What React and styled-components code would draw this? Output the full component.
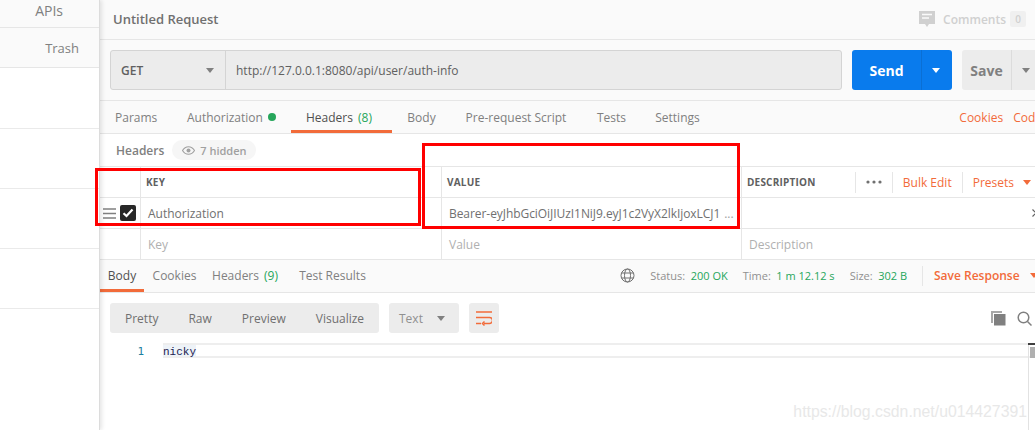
import React from 'react';
import styled, { createGlobalStyle } from 'styled-components';

const GlobalStyle = createGlobalStyle`
  html, body {
    margin: 0;
    padding: 0;
    background: #fff;
  }
  body {
    font-family: "Open Sans", "Liberation Sans", sans-serif;
    font-size: 12px;
    color: #808080;
  }
  * {
    box-sizing: border-box;
  }
`;

const Page = styled.div`
  position: relative;
  display: flex;
  width: 1035px;
  height: 430px;
  overflow: hidden;
`;

const Sidebar = styled.aside`
  flex: 0 0 100px;
  display: flex;
  flex-direction: column;
  background: #fff;
  border-right: 1px solid #dcdcdc;
  box-shadow: 2px 0 4px rgba(0, 0, 0, 0.1);
  z-index: 1;
`;

const SideTab = styled.div`
  height: ${props => props.$height}px;
  display: flex;
  justify-content: flex-end;
  align-items: center;
  padding-right: ${props => props.$pad}px;
  padding-bottom: ${props => props.$bottom || 0}px;
  font-size: ${props => props.$size}px;
  color: #808080;
  background: #fafafa;
  border-bottom: 1px solid #e6e6e6;
`;

const SideItem = styled.div`
  height: ${props => props.$height}px;
  border-bottom: 1px solid #eaeaea;
`;

const Main = styled.main`
  flex: 1;
  min-width: 0;
  display: flex;
  flex-direction: column;
`;

const TitleBar = styled.div`
  height: 40px;
  flex: none;
  display: flex;
  align-items: center;
  justify-content: space-between;
  padding: 0 9px 1px 13px;
  background: #fafafa;
  border-bottom: 1px solid #e6e6e6;
`;

const Title = styled.div`
  font-size: 13px;
  font-weight: 600;
  color: #707070;
  padding-bottom: 1px;
`;

const Comments = styled.div`
  display: flex;
  align-items: center;
  color: #d0d0d0;
  font-weight: 600;
  font-size: 12px;
`;

const CommentCount = styled.span`
  width: 16px;
  height: 16px;
  margin: 0 0 0 4px;
  display: flex;
  align-items: center;
  justify-content: center;
  background: #f0f0f0;
  border-radius: 2px;
  font-size: 10px;
`;

const UrlBar = styled.div`
  height: 61px;
  flex: none;
  display: flex;
  align-items: center;
  padding: 0 0 0 10px;
  background: #fafafa;
  border-bottom: 1px solid #e6e6e6;
`;

const UrlGroup = styled.div`
  flex: 0 0 732px;
  height: 40px;
  display: flex;
  background: #ececec;
  border: 1px solid #d4d4d4;
  border-radius: 3px;
`;

const Method = styled.div`
  flex: 0 0 115px;
  display: flex;
  align-items: center;
  justify-content: space-between;
  padding: 0 11px 0 10px;
  border-right: 1px solid #d4d4d4;
  font-size: 12px;
  font-weight: 600;
  color: #606060;
`;

const UrlText = styled.div`
  display: flex;
  align-items: center;
  padding-left: 10px;
  font-size: 12px;
  color: #606060;
`;

const Caret = styled.span`
  flex: none;
  width: 0;
  height: 0;
  border-left: 4px solid transparent;
  border-right: 4px solid transparent;
  border-top: 5px solid ${props => props.$color || '#808080'};
`;

const SendButton = styled.div`
  flex: 0 0 100px;
  height: 40px;
  margin-left: 10px;
  display: flex;
  background: #097bed;
  border-radius: 3px;
  color: #fff;
  font-size: 14px;
  font-weight: 700;
`;

const SaveButton = styled.div`
  flex: 0 0 88px;
  height: 40px;
  margin-left: 10px;
  display: flex;
  background: #ececec;
  border-radius: 3px;
  color: #808080;
  font-size: 14px;
  font-weight: 700;
`;

const ButtonLabel = styled.span`
  flex: 0 0 ${props => props.$width}px;
  display: flex;
  align-items: center;
  justify-content: center;
  padding-top: 1px;
`;

const ButtonCaret = styled.span`
  flex: 1;
  display: flex;
  align-items: center;
  padding-left: ${props => props.$pad}px;
  border-left: 1px solid ${props => props.$line};
`;

const RequestTabs = styled.div`
  height: 33px;
  flex: none;
  display: flex;
  align-items: stretch;
  background: #fafafa;
  border-bottom: 1px solid #e6e6e6;
`;

const Tab = styled.div`
  position: relative;
  flex: 0 0 ${props => props.$width}px;
  display: flex;
  align-items: center;
  justify-content: ${props => (props.$start ? 'flex-start' : 'center')};
  padding-left: ${props => props.$start || 0}px;
  font-size: 12px;
  color: ${props => (props.$active ? '#505050' : '#808080')};
  white-space: nowrap;
  ${props => props.$active && 'box-shadow: inset 0 -3px 0 #f26b3a;'}
`;

const ResponseTab = styled(Tab)`
  padding-bottom: 1px;
`;

const TabCount = styled.span`
  color: #26a65b;
  margin-left: 5px;
`;

const Dot = styled.span`
  width: 8px;
  height: 8px;
  margin-left: 5px;
  border-radius: 50%;
  background: #26a65b;
`;

const TabLinks = styled.div`
  margin-left: auto;
  display: flex;
  align-items: center;
  gap: 10px;
  margin-right: -7px;
  color: #f26b3a;
  font-size: 12px;
`;

const HeadersBar = styled.div`
  height: 32px;
  flex: none;
  display: flex;
  align-items: center;
  padding-left: 16px;
  gap: 8px;
  font-size: 12px;
  font-weight: 600;
  color: #808080;
`;

const HiddenPill = styled.span`
  height: 20px;
  display: flex;
  align-items: center;
  gap: 5px;
  padding: 0 9px 0 10px;
  background: #f6f6f6;
  border-radius: 10px;
  color: #a0a0a0;
  font-size: 11px;
  font-weight: 600;
`;

const Grid = styled.div`
  flex: none;
  display: grid;
  grid-template-columns: 41px 301px 300px 1fr;
  grid-template-rows: 31px 31px 31px;
  border-top: 1px solid #e6e6e6;
`;

const Cell = styled.div`
  display: flex;
  align-items: center;
  min-width: 0;
  padding: ${props => (props.$drag ? '0 0 0 3px' : '0 7px')};
  gap: 4px;
  border-right: ${props => (props.$last ? 'none' : '1px solid #e6e6e6')};
  border-bottom: 1px solid #e6e6e6;
  font-size: 12px;
  color: ${props => (props.$placeholder ? '#b0b0b0' : '#707070')};
`;

const HeadCell = styled(Cell)`
  padding-left: ${props => (props.$drag ? 0 : 5)}px;
  font-size: 10px;
  font-weight: 700;
  letter-spacing: 0.2px;
  color: #606060;
`;

const ValueText = styled.span`
  white-space: nowrap;
  letter-spacing: -0.06px;
`;

const Ellipsis = styled.span`
  color: #a0a0a0;
`;

const Checkbox = styled.span`
  width: 16px;
  height: 16px;
  display: flex;
  align-items: center;
  justify-content: center;
  background: #282828;
  border-radius: 2px;
`;

const TableActions = styled.div`
  margin-left: auto;
  display: flex;
  align-items: center;
  margin-right: -13px;
  font-size: 12px;
  font-weight: 400;
  letter-spacing: 0;
  color: #f26b3a;
`;

const ActionCell = styled.span`
  height: 21px;
  display: flex;
  align-items: center;
  gap: 9px;
  padding: 0 ${props => props.$pad}px;
  border-left: 1px solid #e6e6e6;
`;

const RemoveIcon = styled.svg`
  flex: none;
  margin-left: auto;
  margin-right: -12px;
`;

const ResponseTabs = styled.div`
  height: 33px;
  flex: none;
  display: flex;
  align-items: stretch;
  background: #fafafa;
  border-bottom: 1px solid #e6e6e6;
`;

const ResponseMeta = styled.div`
  margin-left: auto;
  display: flex;
  align-items: center;
  padding-bottom: 1px;
  font-size: 11px;
  color: #909090;
`;

const MetaItem = styled.span`
  margin-left: ${props => props.$gap}px;
  white-space: nowrap;
`;

const MetaValue = styled.span`
  color: #26a65b;
  margin-left: 5.500px;
`;

const SaveResponse = styled.span`
  display: flex;
  align-items: center;
  gap: 10px;
  height: 20px;
  width: 113px;
  flex: none;
  margin-left: 15px;
  padding-left: 11px;
  border-left: 1px solid #e6e6e6;
  color: #f26b3a;
  font-size: 12px;
  font-weight: 600;
  white-space: nowrap;
`;

const Toolbar = styled.div`
  height: 50px;
  flex: none;
  display: flex;
  align-items: center;
  padding-left: 10px;
  gap: 10px;
`;

const FormatGroup = styled.div`
  height: 30px;
  display: flex;
  align-items: center;
  background: #ececec;
  border-radius: 3px;
  color: #707070;
  font-size: 12px;
  padding-left: 15px;
  width: 269px;
  gap: 30px;
`;

const FormatSelect = styled.div`
  width: 70px;
  height: 30px;
  display: flex;
  align-items: center;
  justify-content: space-between;
  padding: 0 14px 0 10px;
  background: #ececec;
  border-radius: 3px;
  color: #909090;
  font-size: 12px;
`;

const WrapButton = styled.div`
  width: 30px;
  height: 30px;
  display: flex;
  align-items: center;
  justify-content: center;
  background: #ececec;
  border-radius: 3px;
`;

const ToolIcons = styled.div`
  margin-left: auto;
  display: flex;
  align-items: center;
  gap: 11px;
  margin-right: 3px;
`;

const Code = styled.div`
  position: relative;
  flex: 1;
  display: flex;
  align-items: flex-start;
`;

const Gutter = styled.span`
  flex: 0 0 63px;
  height: 15px;
  padding-right: 19px;
  padding-top: 1px;
  text-align: right;
  font-family: "DejaVu Sans Mono", "Liberation Mono", monospace;
  font-size: 11px;
  line-height: 15px;
  color: #1d7f9e;
`;

const ActiveLine = styled.div`
  flex: 1;
  height: 15px;
  border-top: 2px solid #eeeeee;
  border-bottom: 2px solid #eeeeee;
  font-family: "Liberation Mono", "DejaVu Sans Mono", monospace;
  font-size: 11px;
  line-height: 12px;
  color: #202050;
`;

const Selected = styled.span`
  display: inline-block;
  height: 11px;
  background: #eef3f8;
  padding-top: 1px;
`;

const ScrollTrack = styled.span`
  position: absolute;
  top: 0;
  right: 6px;
  bottom: 0;
  width: 1px;
  background: #e2e2e2;
`;

const ScrollMark = styled.span`
  position: absolute;
  top: 0;
  right: 0;
  width: 7px;
  height: 15px;
  background: #b0b0b0 content-box;
  padding: 2px 0 0 2px;
  border-top: 2px solid #404040;
`;

const RedBox = styled.div`
  position: absolute;
  left: ${props => props.$left}px;
  top: ${props => props.$top}px;
  width: ${props => props.$width}px;
  height: ${props => props.$height}px;
  border: 3px solid #ff0000;
  z-index: 2;
`;

const Watermark = styled.div`
  position: absolute;
  right: 8px;
  bottom: 10px;
  font-family: "Liberation Sans", Arial, sans-serif;
  font-size: 15.800px;
  line-height: 17px;
  color: #e8e8e8;
  z-index: 2;
`;

const CommentIcon = () => (
  <svg width="16" height="16" viewBox="0 0 16 16" style={{ marginRight: 8 }}>
    <path d="M0 0h16v13h-6l-2 3-2-3H0z" fill="#d0d0d0" />
    <path d="M3 3.500h10M3 7h7" stroke="#fafafa" strokeWidth="1.600" />
  </svg>
);

const EyeIcon = () => (
  <svg width="13" height="9" viewBox="0 0 13 9">
    <path d="M.5 4.500C2 2 4 .7 6.500.7S11 2 12.500 4.500C11 7 9 8.300 6.500 8.300S2 7 .5 4.500z" fill="none" stroke="#a0a0a0" strokeWidth="1.100" />
    <circle cx="6.500" cy="4.500" r="2" fill="#a0a0a0" />
  </svg>
);

const DragIcon = () => (
  <svg width="13" height="11" viewBox="0 0 13 11">
    <path d="M0 1h13M0 5.500h13M0 10h13" stroke="#808080" strokeWidth="1.300" />
  </svg>
);

const CheckIcon = () => (
  <svg width="12" height="10" viewBox="0 0 12 10">
    <path d="M1.500 5.200L4.500 8 10.500 1.500" fill="none" stroke="#fff" strokeWidth="2.200" />
  </svg>
);

const DotsIcon = () => (
  <svg width="16" height="4" viewBox="0 0 16 4">
    <circle cx="2" cy="2" r="1.600" fill="#707070" />
    <circle cx="8" cy="2" r="1.600" fill="#707070" />
    <circle cx="14" cy="2" r="1.600" fill="#707070" />
  </svg>
);

const GlobeIcon = () => (
  <svg width="15" height="15" viewBox="0 0 15 15" fill="none" stroke="#707070" strokeWidth="1">
    <circle cx="7.500" cy="7.500" r="6.500" />
    <ellipse cx="7.500" cy="7.500" rx="3" ry="6.500" />
    <path d="M1.500 5h12M1.500 10h12" />
  </svg>
);

const WrapIcon = () => (
  <svg width="16" height="15" viewBox="0 0 16 15" fill="none" stroke="#f26b3a" strokeWidth="1.500">
    <path d="M0 1h16M0 6.500h13.500a2.200 2.200 0 0 1 0 6H8M0 12.500h5" />
    <path d="M8.500 10.500L6.500 12.500l2 2" />
  </svg>
);

const CopyIcon = () => (
  <svg width="15" height="15" viewBox="0 0 15 15">
    <path d="M0 0h11v2H2v10H0z" fill="#a8a8a8" />
    <rect x="3" y="3" width="11.500" height="11.500" fill="#808080" />
  </svg>
);

const SearchIcon = () => (
  <svg width="15" height="15" viewBox="0 0 15 15" fill="none" stroke="#808080" strokeWidth="1.500">
    <circle cx="6.500" cy="6.500" r="5.300" />
    <path d="M10.500 10.500L14.500 14.500" />
  </svg>
);

const requestTabs = [
  { label: 'Params', width: 72, start: 15 },
  { label: 'Authorization', width: 119, start: 15, dot: true },
  { label: 'Headers', width: 101, start: 15, count: 8, active: true },
  { label: 'Body', width: 59 },
  { label: 'Pre-request Script', width: 130 },
  { label: 'Tests', width: 61 },
  { label: 'Settings', width: 71 },
];

const responseTabs = [
  { label: 'Body', width: 44, active: true },
  { label: 'Cookies', width: 61 },
  { label: 'Headers', width: 80, count: 9 },
  { label: 'Test Results', width: 95 },
];

const App = () => {
  return (
    <Page>
      <GlobalStyle />
      <Sidebar>
        <SideTab $height={28} $pad={36} $size={14} $bottom={6}>APIs</SideTab>
        <SideTab $height={40} $pad={20} $size={13}>Trash</SideTab>
        <SideItem $height={61} />
        <SideItem $height={60} />
        <SideItem $height={60} />
        <SideItem $height={60} />
      </Sidebar>

      <Main>
        <TitleBar>
          <Title>Untitled Request</Title>
          <Comments>
            <CommentIcon />
            Comments
            <CommentCount>0</CommentCount>
          </Comments>
        </TitleBar>

        <UrlBar>
          <UrlGroup>
            <Method>GET<Caret /></Method>
            <UrlText>http://127.0.0.1:8080/api/user/auth-info</UrlText>
          </UrlGroup>
          <SendButton>
            <ButtonLabel $width={69}>Send</ButtonLabel>
            <ButtonCaret $pad={10} $line="#0a6fd4"><Caret $color="#fff" /></ButtonCaret>
          </SendButton>
          <SaveButton>
            <ButtonLabel $width={49}>Save</ButtonLabel>
            <ButtonCaret $pad={10} $line="#dcdcdc"><Caret /></ButtonCaret>
          </SaveButton>
        </UrlBar>

        <RequestTabs>
          {requestTabs.map(tab => (
            <Tab key={tab.label} $width={tab.width} $start={tab.start} $active={tab.active}>
              {tab.label}
              {tab.dot && <Dot />}
              {tab.count && <TabCount>({tab.count})</TabCount>}
            </Tab>
          ))}
          <TabLinks>
            <span>Cookies</span>
            <span>Code</span>
          </TabLinks>
        </RequestTabs>

        <HeadersBar>
          Headers
          <HiddenPill><EyeIcon />7 hidden</HiddenPill>
        </HeadersBar>

        <Grid>
          <HeadCell $drag />
          <HeadCell>KEY</HeadCell>
          <HeadCell>VALUE</HeadCell>
          <HeadCell $last>
            DESCRIPTION
            <TableActions>
              <ActionCell $pad={10}><DotsIcon /></ActionCell>
              <ActionCell $pad={10}>Bulk Edit</ActionCell>
              <ActionCell $pad={10}>Presets<Caret $color="#f26b3a" /></ActionCell>
            </TableActions>
          </HeadCell>

          <Cell $drag><DragIcon /><Checkbox><CheckIcon /></Checkbox></Cell>
          <Cell>Authorization</Cell>
          <Cell>
            <ValueText>Bearer-eyJhbGciOiJIUzI1NiJ9.eyJ1c2VyX2lkIjoxLCJ1</ValueText>
            <Ellipsis>...</Ellipsis>
          </Cell>
          <Cell $last>
            <RemoveIcon width="8" height="8" viewBox="0 0 8 8">
              <path d="M.5.5l7 7M7.500.5l-7 7" stroke="#606060" strokeWidth="1.200" />
            </RemoveIcon>
          </Cell>

          <Cell />
          <Cell $placeholder>Key</Cell>
          <Cell $placeholder>Value</Cell>
          <Cell $last $placeholder>Description</Cell>
        </Grid>

        <ResponseTabs>
          {responseTabs.map(tab => (
            <ResponseTab key={tab.label} $width={tab.width} $active={tab.active}>
              {tab.label}
              {tab.count && <TabCount>({tab.count})</TabCount>}
            </ResponseTab>
          ))}
          <ResponseMeta>
            <GlobeIcon />
            <MetaItem $gap={15}>Status:<MetaValue>200 OK</MetaValue></MetaItem>
            <MetaItem $gap={15}>Time:<MetaValue>1 m 12.12 s</MetaValue></MetaItem>
            <MetaItem $gap={15}>Size:<MetaValue>302 B</MetaValue></MetaItem>
            <SaveResponse>Save Response<Caret $color="#f26b3a" /></SaveResponse>
          </ResponseMeta>
        </ResponseTabs>

        <Toolbar>
          <FormatGroup>
            <span>Pretty</span>
            <span>Raw</span>
            <span>Preview</span>
            <span>Visualize</span>
          </FormatGroup>
          <FormatSelect>Text<Caret /></FormatSelect>
          <WrapButton><WrapIcon /></WrapButton>
          <ToolIcons>
            <CopyIcon />
            <SearchIcon />
          </ToolIcons>
        </Toolbar>

        <Code>
          <Gutter>1</Gutter>
          <ActiveLine><Selected>nicky</Selected></ActiveLine>
          <ScrollTrack />
          <ScrollMark />
        </Code>
      </Main>

      <RedBox $left={95} $top={168} $width={326} $height={58} />
      <RedBox $left={422} $top={143} $width={318} $height={86} />
      <Watermark>https://blog.csdn.net/u014427391</Watermark>
    </Page>
  );
};

export default App;
